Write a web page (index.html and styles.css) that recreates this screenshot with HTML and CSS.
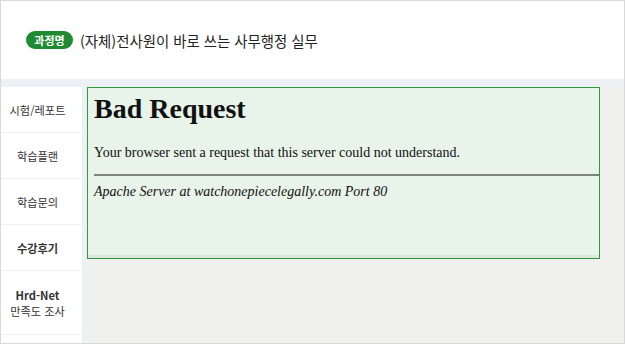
FILE: index.html
```html
<!DOCTYPE html>
<html lang="ko">
<head>
<meta charset="utf-8">
<link rel="stylesheet" href="styles.css">
</head>
<body>
<div class="frame">
  <header class="header">
    <span class="badge">과정명</span>
    <span class="title">(자체)전사원이 바로 쓰는 사무행정 실무</span>
  </header>
  <div class="main">
    <nav class="side">
      <div class="item">시험/레포트</div>
      <div class="item">학습플랜</div>
      <div class="item">학습문의</div>
      <div class="item bold">수강후기</div>
      <div class="item tall"><span class="bold">Hrd-Net</span><span>만족도 조사</span></div>
    </nav>
    <section class="content">
      <div class="box">
        <h1 class="h1">Bad Request</h1>
        <p class="msg">Your browser sent a request that this server could not understand.</p>
        <hr class="rule">
        <address class="addr">Apache Server at watchonepiecelegally.com Port 80</address>
      </div>
    </section>
  </div>
</div>
</body>
</html>
```
FILE: styles.css
```css
* { box-sizing: border-box; }
html, body { margin: 0; padding: 0; }
body { width: 625px; height: 344px; overflow: hidden; background: #fff; }
.frame {
  width: 625px; height: 344px;
  border: 1px solid #d9d9d9;
  display: flex; flex-direction: column;
  font-family: "Noto Sans CJK KR", "Noto Sans", sans-serif;
}
.header {
  height: 78px; background: #fff;
  display: flex; align-items: center;
  padding-left: 25px; gap: 7px;
}
.badge {
  display: inline-flex; align-items: center; justify-content: center;
  width: 47px; height: 18px; border-radius: 9px;
  background: #1f8a31; color: #fff;
  font-size: 11px; font-weight: 700; line-height: 1;
}
.title { font-size: 14.4px; color: #222; }
.main {
  flex: 1; display: flex; background: #edf0f4;
  padding-top: 8px; min-height: 0;
}
.side {
  width: 81px; background: #fff; margin-right: 5px;
  display: flex; flex-direction: column;
}
.item {
  height: 46px; border-bottom: 1px solid #eef0f3;
  padding-right: 8px;
  display: flex; flex-direction: column; align-items: center; justify-content: center;
  font-size: 11.2px; color: #333; line-height: 16px;
}
.item.tall { height: 64px; }
.bold { font-weight: 700; }
.content { flex: 1; background: #f0f0ee; }
.box {
  width: 513px; height: 172px;
  background: #e8f3e9; border: 1px solid #2e9a3c;
  box-shadow: inset 0 -3px 0 #dce7dd;
  padding: 0 0 0 6px;
  font-family: "Liberation Serif", "Times New Roman", serif;
  color: #111;
}
.h1 { margin: 0; padding-top: 5px; font-size: 28px; line-height: 32px; font-weight: 700; }
.msg { margin: 20px 0 0; font-size: 14px; line-height: 16px; }
.rule { margin: 13px 0 0; border: 0; border-top: 2px solid #7c847e; }
.addr { margin-top: 8px; font-size: 14px; line-height: 16px; font-style: italic; }
```
